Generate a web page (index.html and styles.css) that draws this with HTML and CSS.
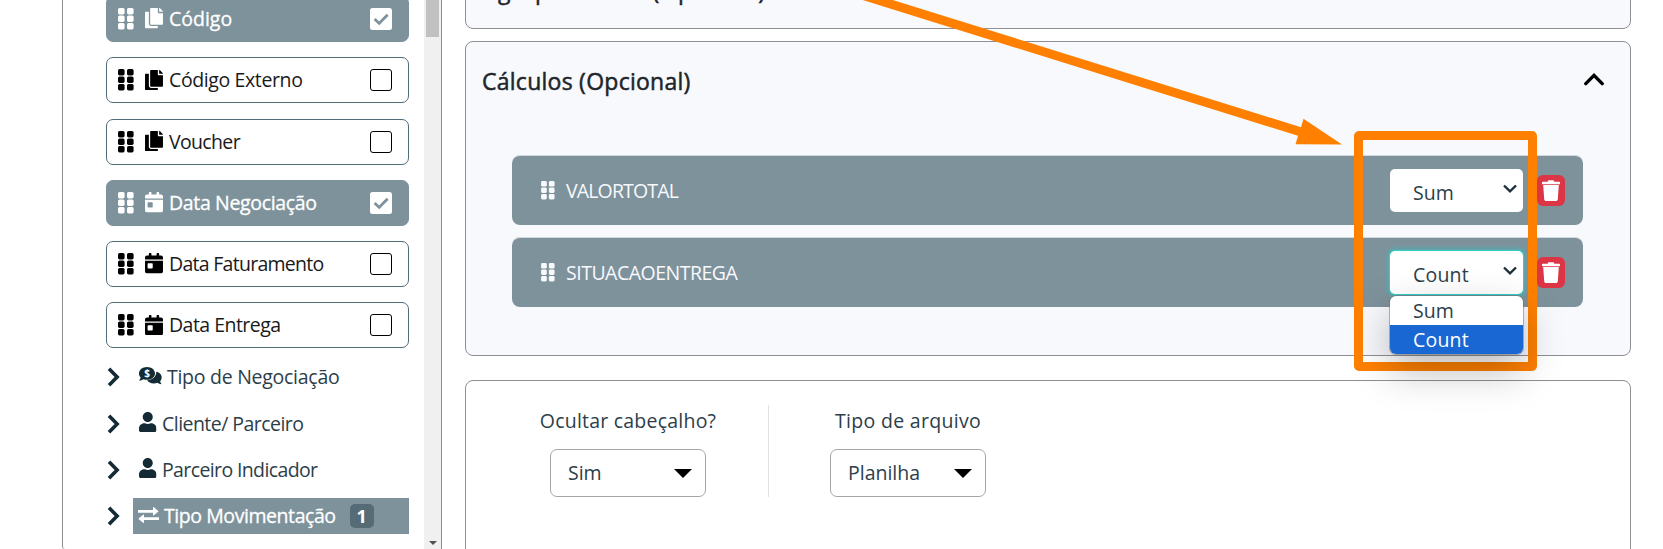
FILE: index.html
```html
<!DOCTYPE html>
<html lang="pt-BR">
<head>
<meta charset="utf-8">
<title>Relatório</title>
<link rel="stylesheet" href="styles.css">
</head>
<body>
<svg class="defs" width="0" height="0">
  <symbol id="grip" viewBox="0 0 16 22"><rect x="0" y="0" width="6.6" height="6.4" rx="1.6"/><rect x="9" y="0" width="6.6" height="6.4" rx="1.6"/><rect x="0" y="7.5" width="6.6" height="6.4" rx="1.6"/><rect x="9" y="7.5" width="6.6" height="6.4" rx="1.6"/><rect x="0" y="15" width="6.6" height="6.4" rx="1.6"/><rect x="9" y="15" width="6.6" height="6.4" rx="1.6"/></symbol>
  <symbol id="copy" viewBox="0 0 448 512"><path d="M320 448v40c0 13.255-10.745 24-24 24H24c-13.255 0-24-10.745-24-24V120c0-13.255 10.745-24 24-24h72v296c0 30.879 25.121 56 56 56h168zm0-344V0H152c-13.255 0-24 10.745-24 24v368c0 13.255 10.745 24 24 24h272c13.255 0 24-10.745 24-24V128H344c-13.2 0-24-10.8-24-24zm120.971-31.029L375.029 7.029A24 24 0 0 0 358.059 0H352v96h96v-6.059a24 24 0 0 0-7.029-16.97z"/></symbol>
  <symbol id="cal" viewBox="0 0 448 512"><path d="M0 464c0 26.5 21.5 48 48 48h352c26.5 0 48-21.5 48-48V192H0v272zm64-192c0-8.800 7.200-16 16-16h96c8.800 0 16 7.200 16 16v96c0 8.800-7.200 16-16 16H80c-8.800 0-16-7.200-16-16v-96zM400 64h-48V16c0-8.800-7.200-16-16-16h-32c-8.800 0-16 7.200-16 16v48H160V16c0-8.800-7.200-16-16-16h-32c-8.800 0-16 7.200-16 16v48H48C21.500 64 0 85.500 0 112v48h448v-48c0-26.500-21.500-48-48-48z"/></symbol>
  <symbol id="user" viewBox="0 0 448 512"><path d="M224 256c70.700 0 128-57.300 128-128S294.700 0 224 0 96 57.300 96 128s57.300 128 128 128zm89.600 32h-16.700c-22.200 10.200-46.900 16-72.900 16s-50.600-5.800-72.900-16h-16.700C60.200 288 0 348.200 0 422.400V464c0 26.500 21.500 48 48 48h352c26.500 0 48-21.500 48-48v-41.600c0-74.200-60.200-134.400-134.400-134.400z"/></symbol>
  <symbol id="chev" viewBox="0 0 13 20"><path d="M2 1.800 10.100 10 2 18.200" fill="none" stroke="currentColor" stroke-width="3.600"/></symbol>
  <symbol id="trash" viewBox="0 0 18 21"><path d="M.6 1.700h5L6.500.3h5l.9 1.400h5c.3 0 .6.300.6.600v1.900H0V2.300c0-.3.300-.6.600-.6zM1.200 5h15.600l-1 14.200c-.1 1-.9 1.800-1.900 1.800H4.100c-1 0-1.800-.8-1.900-1.800z"/></symbol>
  <symbol id="down" viewBox="0 0 14 9"><path d="M1 1.500 7 7.300 13 1.500" fill="none" stroke="#1d2f3a" stroke-width="2.400"/></symbol>
  <symbol id="checked" viewBox="0 0 22 22"><rect width="22" height="22" rx="2.500" fill="#fff"/><path d="M4.600 11 9.200 15.400 17.600 6.700" fill="none" stroke="#7e929c" stroke-width="2.800"/></symbol>
</svg>

<div class="app">
  <aside class="side">
    <div class="fields">
      <div class="field on"><svg class="grip"><use href="#grip"/></svg><svg class="ico"><use href="#copy"/></svg><span class="t1">Código</span><svg class="check"><use href="#checked"/></svg></div>
      <div class="field"><svg class="grip"><use href="#grip"/></svg><svg class="ico"><use href="#copy"/></svg><span class="t2">Código Externo</span><i class="box"></i></div>
      <div class="field"><svg class="grip"><use href="#grip"/></svg><svg class="ico"><use href="#copy"/></svg><span class="t3">Voucher</span><i class="box"></i></div>
      <div class="field on"><svg class="grip"><use href="#grip"/></svg><svg class="ico"><use href="#cal"/></svg><span class="t4">Data Negociação</span><svg class="check"><use href="#checked"/></svg></div>
      <div class="field"><svg class="grip"><use href="#grip"/></svg><svg class="ico"><use href="#cal"/></svg><span class="t5">Data Faturamento</span><i class="box"></i></div>
      <div class="field"><svg class="grip"><use href="#grip"/></svg><svg class="ico"><use href="#cal"/></svg><span class="t6">Data Entrega</span><i class="box"></i></div>
    </div>
    <div class="tree">
      <div class="node"><svg class="chev"><use href="#chev"/></svg><div class="label"><svg class="talk" viewBox="0 0 23 18"><path d="M8 0c4.500 0 8 2.800 8 6.400s-3.500 6.400-8 6.400c-1.300 0-2.500-.2-3.500-.6C3.300 12.900 1.800 13.500 0 13.500c.8-.8 1.500-2 1.700-3C.6 9.400 0 8 0 6.400 0 2.800 3.500 0 8 0z"/><path d="M17.300 4.800c3.200.6 5.400 2.900 5.400 5.600 0 1.500-.6 2.800-1.600 3.900.2 1 .8 2 1.600 2.900-1.700 0-3.200-.6-4.400-1.400-1 .4-2.200.6-3.500.6-3 0-5.600-1.300-6.700-3.200 5.300-.3 9.400-3.600 9.200-8.400z"/><text x="8" y="10.300" text-anchor="middle" class="coin">$</text></svg><span class="n1">Tipo de Negociação</span></div></div>
      <div class="node"><svg class="chev"><use href="#chev"/></svg><div class="label"><svg class="user"><use href="#user"/></svg><span class="n2">Cliente/ Parceiro</span></div></div>
      <div class="node"><svg class="chev"><use href="#chev"/></svg><div class="label"><svg class="user"><use href="#user"/></svg><span class="n3">Parceiro Indicador</span></div></div>
      <div class="node"><svg class="chev"><use href="#chev"/></svg><div class="label hot"><svg class="swap" viewBox="0 0 21 16"><path d="M0 3h15V.5c0-.5.500-.7.900-.3l4.300 3.700c.3.300.3.600 0 .9l-4.300 3.400c-.4.400-.9.200-.9-.3V5.700H.5A.5.500 0 0 1 0 5.200zM21 10.300H6V8c0-.5-.5-.7-.9-.3L.8 11.300c-.3.300-.3.600 0 .9l4.300 3.500c.4.400.9.200.9-.3V13h14.500a.5.500 0 0 0 .5-.5z"/></svg><span class="n4">Tipo Movimentação</span><b class="badge">1</b></div></div>
    </div>
    <div class="scroll"><div class="thumb"></div><div class="arrow"></div></div>
  </aside>

  <main class="main">
    <section class="panel first"><h2 class="h1t">Agrupamentos (Opcional)</h2></section>
    <section class="panel calc">
      <header class="head"><h2 class="h2t">Cálculos (Opcional)</h2><svg class="up" viewBox="0 0 20 13"><path d="M1.800 10.600 10 2.400l8.200 8.200" fill="none" stroke="#000" stroke-width="3.400" stroke-linecap="round"/></svg></header>
      <div class="row"><svg class="grip sm"><use href="#grip"/></svg><span class="r1">VALORTOTAL</span><div class="sel"><span class="s1">Sum</span><svg class="down"><use href="#down"/></svg></div><div class="del"><svg><use href="#trash"/></svg></div></div>
      <div class="row"><svg class="grip sm"><use href="#grip"/></svg><span class="r2">SITUACAOENTREGA</span><div class="sel focus"><span class="s2">Count</span><svg class="down"><use href="#down"/></svg><div class="menu"><div class="opt"><span class="s1">Sum</span></div><div class="opt cur"><span class="s2">Count</span></div></div></div><div class="del"><svg><use href="#trash"/></svg></div></div>
    </section>
    <section class="panel out">
      <div class="group"><span class="g1">Ocultar cabeçalho?</span><div class="pick"><span class="g3">Sim</span><i class="tri"></i></div></div>
      <div class="sep"></div>
      <div class="group"><span class="g2">Tipo de arquivo</span><div class="pick"><span class="g4">Planilha</span><i class="tri"></i></div></div>
    </section>
  </main>
</div>
<svg class="pointer" viewBox="0 0 1663 549"><path d="M862.700 0 1298 135.800 1295.500 144.300 1342 144.500 1303.500 118.700 1301 127.200 892.700 0z"/></svg>
<div class="frame"></div>
</body>
</html>
```

FILE: styles.css
```css
* { box-sizing: border-box; }
body {
  margin: 0;
  width: 1663px;
  height: 549px;
  overflow: hidden;
  background: #fff;
  font-family: "Open Sans", "Noto Sans", sans-serif;
  font-size: 19.5px;
  line-height: 28px;
  color: #2c3e49;
}
svg { display: block; flex: none; fill: currentColor; }
span { white-space: nowrap; }
.defs { position: absolute; }
.app { display: flex; height: 549px; padding-left: 62px; overflow: hidden; }

.side {
  position: relative;
  width: 380px;
  height: 549px;
  border: solid #8c8c8c;
  border-width: 0 1px;
  border-bottom-left-radius: 3px;
  padding-left: 43px;
}
.fields { display: flex; flex-direction: column; gap: 15.25px; margin-top: -4px; width: 303px; }
.field {
  display: flex;
  align-items: center;
  height: 46px;
  padding: 0 16px 0 11px;
  border: 1px solid #4f6c78;
  border-radius: 7px;
  color: #000;
}
.field span { color: #1a1a1a; }
.field.on { background: #7e929c; border-color: #7e929c; color: #fff; }
.field.on span { color: #fff; -webkit-text-stroke: .3px #fff; }
.grip { width: 16px; height: 22px; margin-right: 11px; }
.ico { width: 18px; height: 20.5px; margin: -1px 6px 0 0; }
.box { width: 22px; height: 22px; margin-left: auto; border: 1px solid #000; border-radius: 3px; }
.check { width: 22px; height: 22px; margin-left: auto; }
.t2 { letter-spacing: -.38px; }
.t3 { letter-spacing: -.65px; }
.t4 { letter-spacing: -.35px; }
.t5 { letter-spacing: -.72px; }
.t6 { letter-spacing: -.53px; }

.tree { margin-top: 6px; }
.node { display: flex; align-items: center; height: 46.3px; width: 303px; }
.chev { width: 13px; height: 20px; margin: 0 13px 0 1px; color: #142a35; }
.label { display: flex; align-items: center; width: 276px; height: 36px; padding-left: 6px; }
.label svg { color: #142a35; }
.label.hot, .label.hot svg { color: #fff; }
.label.hot { background: #7e929c; padding-left: 5px; }
.label.hot span { -webkit-text-stroke: .3px #fff; }
.talk { width: 23px; height: 18px; margin: -3px 5px 0 0; }
.coin { fill: #fff; font-size: 10px; font-weight: 700; }
.user { width: 17.5px; height: 20px; margin: -3px 5.500px 0 0; }
.swap { width: 21px; height: 16px; margin: -3px 5px 0 0; }
.n1 { letter-spacing: -.27px; }
.n2 { letter-spacing: -.54px; }
.n3 { letter-spacing: -.62px; }
.n4 { letter-spacing: -.43px; }
.badge {
  width: 24px; height: 24px; margin-left: 14px;
  border-radius: 5px; background: #556c77; color: #fff;
  font-size: 18px; line-height: 25px; text-align: center;
}
.scroll { position: absolute; top: 0; right: 0; width: 17px; height: 549px; background: #f0f0f0; }
.thumb { width: 13px; height: 37px; margin-left: 2px; background: #c1c1c1; }
.arrow { width: 0; margin: 504px 0 0 5px; border: 4px solid transparent; border-top-color: #505050; border-bottom: 0; }

.main { width: 1166px; margin-left: 23px; }
.panel { border: 1px solid #8e8f94; border-radius: 8px; background: #f8f9fc; }
h2 { margin: 0; font-size: 23px; line-height: 32px; font-weight: 500; color: #212529; white-space: nowrap; -webkit-text-stroke: .5px #212529; }
.h1t { margin-top: -7px; letter-spacing: .38px; }
.h2t { margin-top: -1px; letter-spacing: .26px; }
.first { height: 49px; margin-top: -20px; padding-left: 17px; display: flex; align-items: flex-start; }
.calc { height: 315px; margin-top: 12px; padding: 24px 47px 0 46px; }
.head { display: flex; justify-content: space-between; height: 32px; margin: 0 -23px 57px -30px; }
.up { width: 20px; height: 13px; margin: 7px 2px 0 0; }
.row {
  display: flex; align-items: center;
  height: 70px; padding: 0 18px 0 29px;
  background: #7e929c; border-top: 1px solid #cfd9dd; border-radius: 8px; color: #f8f9fc;
}
.row + .row { margin-top: 12px; }
.grip.sm { width: 14px; height: 19px; margin-right: 11px; }
.r1 { letter-spacing: -.85px; }
.r2 { letter-spacing: -.5px; }
.s2 { letter-spacing: .2px; }
.sel {
  position: relative;
  display: flex; align-items: center; justify-content: space-between;
  width: 133px; height: 43px; margin: 0 14px 0 auto; padding: 4px 6px 0 23px;
  background: #fff; border-radius: 5px; color: #2c3e49;
}
.focus { box-shadow: 0 0 0 1px #35cfc9, 0 0 3px 4px rgba(60, 190, 190, .4); }
.down { width: 14px; height: 9px; margin-top: -8px; }
.menu {
  position: absolute; left: 0; top: 45px; width: 133px; height: 58px; overflow: hidden;
  border-radius: 6px; background: #fff; z-index: 2;
  box-shadow: 0 0 0 1px rgba(110, 110, 110, .5), 0 16px 40px rgba(0, 0, 0, .28);
}
.opt { height: 29px; padding: 0 0 0 23px; line-height: 29px; }
.cur { background: #1967d2; color: #fff; }
.del { display: grid; place-items: center; width: 28px; height: 31px; border-radius: 6px; background: #dc3545; color: #fff; }
.del svg { width: 18px; height: 21px; }

.out { display: flex; height: 190px; margin-top: 24px; padding: 24px 0 0 74px; background: #fff; }
.group { display: flex; flex-direction: column; align-items: center; width: 176px; padding-top: 2px; }
.g1 { letter-spacing: .22px; }
.g2 { letter-spacing: .3px; }
.sep { width: 1px; height: 92px; margin: 0 51px 0 52px; background: #dee2e6; }
.pick {
  display: flex; align-items: center; justify-content: space-between;
  width: 156px; height: 48px; margin-top: 14px; padding: 0 13px 0 17px;
  border: 1px solid #a5a5a5; border-radius: 7px;
}
.tri { width: 0; border: 9.5px solid transparent; border-top-color: #000; border-bottom: 0; }

.pointer { position: absolute; left: 0; top: 0; width: 1663px; height: 549px; fill: #ff8000; }
.frame { position: absolute; left: 1354px; top: 131px; width: 183px; height: 240px; border: 9px solid #ff8000; border-radius: 5px; }
```
